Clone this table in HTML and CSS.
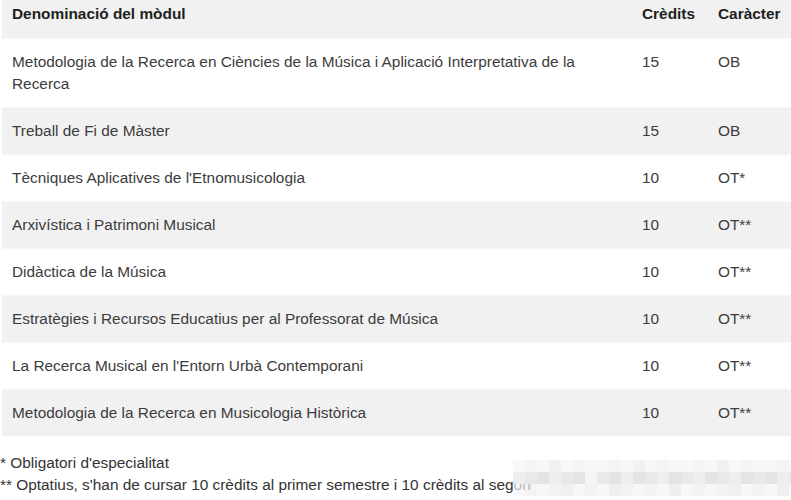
FILE: index.html
```html
<!DOCTYPE html>
<html lang="ca">
<head>
<meta charset="utf-8">
<link rel="stylesheet" href="styles.css">
</head>
<body>
<div class="page">
  <table class="modules">
    <colgroup>
      <col class="c-name">
      <col class="c-cred">
      <col class="c-char">
    </colgroup>
    <thead>
      <tr>
        <th>Denominació del mòdul</th>
        <th>Crèdits</th>
        <th>Caràcter</th>
      </tr>
    </thead>
    <tbody>
      <tr><td>Metodologia de la Recerca en Ciències de la Música i Aplicació Interpretativa de la Recerca</td><td>15</td><td>OB</td></tr>
      <tr class="alt"><td>Treball de Fi de Màster</td><td>15</td><td>OB</td></tr>
      <tr><td>Tècniques Aplicatives de l'Etnomusicologia</td><td>10</td><td>OT*</td></tr>
      <tr class="alt"><td>Arxivística i Patrimoni Musical</td><td>10</td><td>OT**</td></tr>
      <tr><td>Didàctica de la Música</td><td>10</td><td>OT**</td></tr>
      <tr class="alt"><td>Estratègies i Recursos Educatius per al Professorat de Música</td><td>10</td><td>OT**</td></tr>
      <tr><td>La Recerca Musical en l'Entorn Urbà Contemporani</td><td>10</td><td>OT**</td></tr>
      <tr class="alt"><td>Metodologia de la Recerca en Musicologia Històrica</td><td>10</td><td>OT**</td></tr>
    </tbody>
  </table>
  <div class="notes">
    <p>* Obligatori d'especialitat</p>
    <p>** Optatius, s'han de cursar 10 crèdits al primer semestre i 10 crèdits al segon</p>
    <div class="mosaic" aria-hidden="true">
      <div class="mrow r1">
        <i class="a"></i><i class="b"></i><i class="a"></i><i class="c"></i><i class="a"></i><i class="b"></i><i class="a"></i><i class="a"></i><i class="b"></i><i class="a"></i><i class="c"></i><i class="a"></i><i class="b"></i><i class="a"></i><i class="a"></i><i class="b"></i><i class="a"></i><i class="c"></i><i class="a"></i><i class="b"></i><i class="a"></i><i class="a"></i><i class="b"></i><i class="a"></i>
      </div>
      <div class="mrow r2">
        <i class="b"></i><i class="c"></i><i class="d"></i><i class="b"></i><i class="c"></i><i class="d"></i><i class="a"></i><i class="c"></i><i class="d"></i><i class="b"></i><i class="d"></i><i class="c"></i><i class="b"></i><i class="d"></i><i class="c"></i><i class="b"></i><i class="d"></i><i class="c"></i><i class="b"></i><i class="d"></i><i class="c"></i><i class="d"></i><i class="b"></i><i class="c"></i>
      </div>
      <div class="mrow r3">
        <i class="a"></i><i class="b"></i><i class="a"></i><i class="b"></i><i class="c"></i><i class="a"></i><i class="b"></i><i class="a"></i><i class="c"></i><i class="b"></i><i class="a"></i><i class="b"></i><i class="a"></i><i class="c"></i><i class="a"></i><i class="b"></i><i class="a"></i><i class="b"></i><i class="c"></i><i class="a"></i><i class="b"></i><i class="a"></i><i class="c"></i><i class="a"></i>
      </div>
    </div>
  </div>
</div>
</body>
</html>
```
FILE: styles.css
```css
html, body {
  margin: 0;
  padding: 0;
  background: #ffffff;
}

body {
  font-family: "Liberation Sans", Arial, sans-serif;
  font-size: 15.4px;
  color: #3c3c3c;
}

.page {
  width: 791px;
  height: 500px;
  overflow: hidden;
}

.modules {
  margin-left: 2px;
  width: 789px;
  border-collapse: separate;
  border-spacing: 0;
  table-layout: fixed;
}

.c-name { width: 630px; }
.c-cred { width: 76px; }
.c-char { width: 83px; }

.modules th {
  background: #f1f1f1;
  color: #1e1e1e;
  font-weight: bold;
  text-align: left;
  line-height: 22px;
  padding: 3px 10px 13px 10px;
  white-space: nowrap;
}

.modules td {
  line-height: 22px;
  padding: 12px 10px 12px 10px;
  vertical-align: top;
  border-top: 1px solid #f6f6f6;
}

.modules th:first-child,
.modules td:first-child {
  padding-right: 24px;
}

.modules tr.alt td {
  background: #f1f1f1;
}

.notes {
  position: relative;
  padding-top: 16px;
}

.notes p {
  margin: 0;
  line-height: 22px;
  color: #333333;
  white-space: nowrap;
}

.mosaic {
  position: absolute;
  left: 513px;
  top: 24px;
  width: 278px;
  display: flex;
  flex-direction: column;
}

.mrow {
  display: flex;
  height: 12px;
}

.mrow i {
  display: block;
  width: 12px;
  flex: none;
}

.mrow i.a { background: #f4f4f4; }
.mrow i.b { background: #eeeeee; }
.mrow i.c { background: #e9e9e9; }
.mrow i.d { background: #e4e4e4; }

.mrow.r1 { opacity: 0.6; }
.mrow.r3 { opacity: 0.7; }
```
